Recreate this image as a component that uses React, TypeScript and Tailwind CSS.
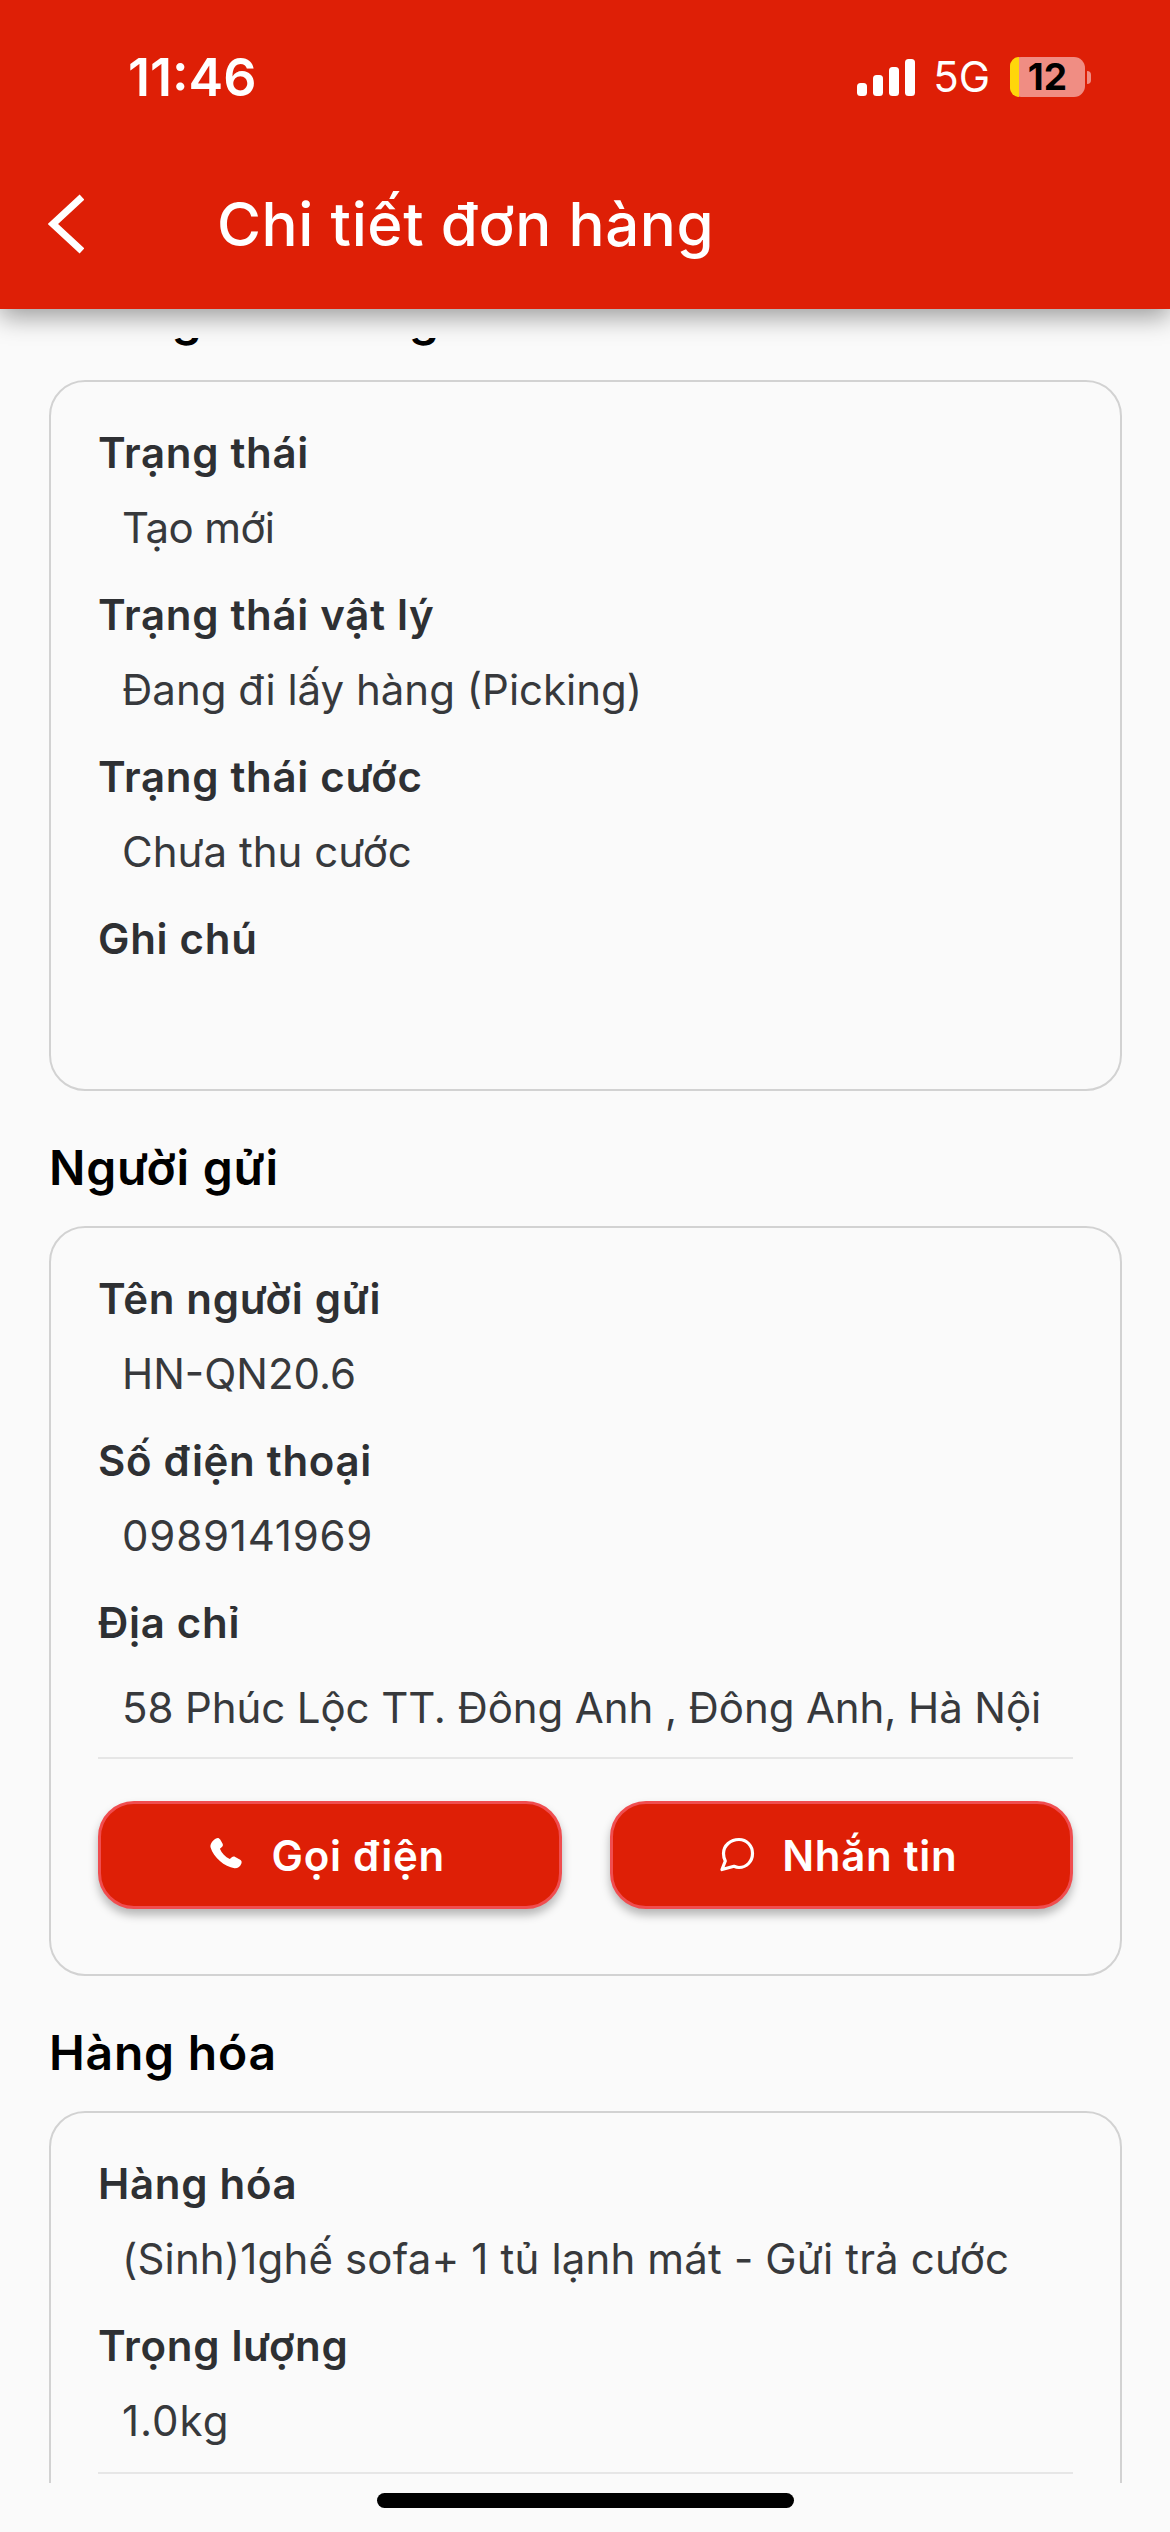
import React from 'react';

const Label = ({ children }: { children: React.ReactNode }) => (
  <div className="h-[54px] text-[42px] leading-[54px] font-semibold tracking-[0.7px] text-[#2e3033]">{children}</div>
);

const Field = ({ label, value, valueClass }: { label: string; value?: string; valueClass?: string }) => (
  <div className="mb-[33px]">
    <Label>{label}</Label>
    <div className={`mt-[21px] h-[54px] pl-[24px] text-[42px] leading-[54px] font-normal text-[#37393c] whitespace-nowrap ${valueClass ?? ''}`}>{value}</div>
  </div>
);

const Card = ({ children }: { children: React.ReactNode }) => (
  <div className="rounded-[36px] border-2 border-[#d2d2d2] px-[47px] pt-[44px]">{children}</div>
);

const Heading = ({ children }: { children: React.ReactNode }) => (
  <h2 className="h-[60px] text-[48px] leading-[60px] font-semibold tracking-[0.8px] text-black">{children}</h2>
);

const ActionButton = ({ icon, label }: { icon: React.ReactNode; label: string }) => (
  <button className="flex h-[108px] flex-1 items-center justify-center gap-[27px] rounded-[36px] border-[3px] border-[#f04d4f] bg-[#de1f06] pr-[6px] text-[42px] font-semibold tracking-[0.7px] text-white shadow-[0_6px_10px_rgba(0,0,0,0.28)]">
    {icon}
    <span>{label}</span>
  </button>
);

const PhoneIcon = () => (
  <svg width="36" height="36" viewBox="0 0 36 36" fill="white">
    <path d="M7 1.500c1.600-1 3.200-.6 4.200 1l2.300 4c.7 1.300.5 2.600-.6 3.500l-2 1.700c1.800 4.500 5.400 8.300 9.900 10.300l2-1.800c1-.9 2.300-1 3.400-.3l5 2.900c1.300.8 1.800 2.200 1.200 3.600-1.100 2.900-3.600 5-6.900 4.800C15.500 29.800 4.600 20.500 1.600 10.500.7 7 3.600 3.500 7 1.500z" />
  </svg>
);

const ChatIcon = () => (
  <svg width="36" height="36" viewBox="0 0 36 36" fill="none" stroke="white" strokeWidth="3.200" strokeLinejoin="round">
    <path d="M20 2.500c7.500 0 13.500 6 13.500 14s-6 14-13.500 14c-2 0-3.500-.5-5-1.200L3 32.500l3.300-8.500c-1.200-2.200-1.800-4.800-1.800-7.500 0-8 7-14 15.500-14z" />
  </svg>
);

export default function App() {
  return (
    <div className="flex h-[2532px] w-[1170px] flex-col overflow-hidden bg-[#fafafa] font-['Inter',sans-serif]">
      {/* App bar */}
      <header className="relative z-10 h-[309px] shrink-0 bg-[#de1f06] text-white shadow-[0_8px_24px_rgba(0,0,0,0.38)]">
        <div className="flex h-[160px] items-start justify-between pl-[128px] pr-[79px] pt-[48px]">
          <span className="text-[52px] leading-[60px] font-semibold">11:46</span>
          <div className="flex items-center pt-[9px]">
            <svg width="58" height="37" viewBox="0 0 58 37" fill="white">
              <rect x="0" y="24" width="10" height="13" rx="3.500" />
              <rect x="16" y="16" width="10" height="21" rx="3.500" />
              <rect x="32" y="8" width="10" height="29" rx="3.500" />
              <rect x="48" y="0" width="10" height="37" rx="3.500" />
            </svg>
            <span className="ml-[18px] text-[42px] leading-[40px] font-normal">5G</span>
            <div className="ml-[20px] flex items-center">
              <div className="relative flex h-[40px] w-[75px] items-center justify-center rounded-[11px] bg-[#f08d83]">
                <div className="absolute inset-y-0 left-0 w-[9px] rounded-l-[11px] bg-[#ffd60a]" />
                <span className="text-[37px] leading-[40px] font-bold text-black">12</span>
              </div>
              <div className="ml-[2px] h-[13px] w-[4px] rounded-r-full bg-[#f08d83]" />
            </div>
          </div>
        </div>
        <div className="flex items-center pl-[48px] pt-[28px]">
          <svg width="36" height="60" viewBox="0 0 36 60" fill="none" stroke="white" strokeWidth="7">
            <path d="M34 3 5 30l29 27" />
          </svg>
          <h1 className="ml-[133px] text-[60px] leading-[72px] font-medium tracking-[0.6px]">Chi tiết đơn hàng</h1>
        </div>
      </header>

      {/* Scrolled content, clipped just under the app bar and above the home indicator */}
      <main className="mt-[29px] h-[2145px] shrink-0 overflow-hidden pl-[49px] pr-[48px]">
        <div className="mt-[-50px]">
          <Heading>Thông tin chung</Heading>
          <div className="mt-[32px]">
            <Card>
              <Field label="Trạng thái" value="Tạo mới" valueClass="tracking-[-0.6px]" />
              <Field label="Trạng thái vật lý" value="Đang đi lấy hàng (Picking)" />
              <Field label="Trạng thái cước" value="Chưa thu cước" />
              <Field label="Ghi chú" />
              <div className="h-[15px]" />
            </Card>
          </div>

          <div className="mt-[47px]">
            <Heading>Người gửi</Heading>
          </div>
          <div className="mt-[28px]">
            <Card>
              <Field label="Tên người gửi" value="HN-QN20.6" />
              <Field label="Số điện thoại" value="0989141969" valueClass="tracking-[0.8px]" />
              <Label>Địa chỉ</Label>
              <div className="mt-[31px] h-[54px] pl-[24px] text-[42px] leading-[54px] tracking-[-0.1px] text-[#37393c] whitespace-nowrap">
                58 Phúc Lộc TT. Đông Anh , Đông Anh, Hà Nội
              </div>
              <div className="mt-[22px] border-t-2 border-[#e6e6e6]" />
              <div className="mt-[42px] flex gap-[48px]">
                <ActionButton icon={<PhoneIcon />} label="Gọi điện" />
                <ActionButton icon={<ChatIcon />} label="Nhắn tin" />
              </div>
              <div className="h-[65px]" />
            </Card>
          </div>

          <div className="mt-[47px]">
            <Heading>Hàng hóa</Heading>
          </div>
          <div className="mt-[28px]">
            <Card>
              <Field label="Hàng hóa" value="(Sinh)1ghế sofa+ 1 tủ lạnh mát - Gửi trả cước" valueClass="tracking-[0.15px]" />
              <Label>Trọng lượng</Label>
              <div className="mt-[21px] h-[54px] pl-[24px] text-[42px] leading-[54px] tracking-[1px] text-[#37393c]">1.0kg</div>
              <div className="mt-[24px] border-t-2 border-[#e6e6e6]" />
              <div className="h-[200px]" />
            </Card>
          </div>
        </div>
      </main>

      {/* Home indicator */}
      <div className="flex flex-1 justify-center pt-[10px]">
        <div className="h-[15px] w-[417px] rounded-full bg-black" />
      </div>
    </div>
  );
}
